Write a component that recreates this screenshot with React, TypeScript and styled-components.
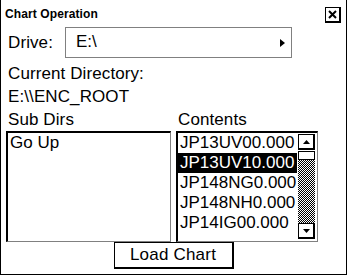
import React from "react"
import styled, { createGlobalStyle } from "styled-components"

const GlobalStyle = createGlobalStyle`
  html, body {
    margin: 0;
    padding: 0;
    background: #ffffff;
  }
  body {
    font-family: "Liberation Sans", Arial, sans-serif;
    color: #000;
  }
`

const Frame = styled.div`
  box-sizing: border-box;
  width: 347px;
  height: 275px;
  border-right: 1px solid #000;
  border-bottom: 1px solid #000;
  border-left: 1px solid #000;
  padding: 0 0 0 5px;
  display: flex;
  flex-direction: column;
`

const TitleBar = styled.div`
  display: flex;
  justify-content: space-between;
  align-items: flex-start;
  height: 24px;
`

const Title = styled.span`
  font-size: 12px;
  font-weight: bold;
  margin: 7px 0 0 -1px;
  letter-spacing: 0.1px;
`

const CloseButton = styled.div`
  box-sizing: border-box;
  width: 16px;
  height: 16px;
  margin: 7px 5px 0 0;
  border: 1px solid #000;
  border-right-width: 2px;
  border-bottom-width: 2px;
  display: flex;
  align-items: center;
  justify-content: center;
`

const DriveRow = styled.div`
  display: flex;
  align-items: center;
  height: 30px;
  margin-top: 3px;
`

const Label = styled.div<{ $width?: number }>`
  font-size: 17px;
  letter-spacing: 0.1px;
  line-height: 23px;
  padding-left: 2px;
  width: ${(p) => (p.$width ? `${p.$width}px` : "auto")};
`

const DriveSelect = styled.div`
  box-sizing: border-box;
  width: 227px;
  height: 31px;
  border: 1px solid #808080;
  display: flex;
  align-items: center;
  justify-content: space-between;
  padding: 0 6px 0 10px;
  font-size: 17px;
`

const Arrow = styled.span`
  width: 0;
  height: 0;
  border-top: 4px solid transparent;
  border-bottom: 4px solid transparent;
  border-left: 5px solid #000;
  margin-top: 2px;
`

const InfoBlock = styled.div`
  margin-top: 5px;
`

const Columns = styled.div`
  display: grid;
  grid-template-columns: 170px 142px;
`

const Column = styled.div`
  display: flex;
  flex-direction: column;
`

const ListBox = styled.div<{ $width: number }>`
  box-sizing: border-box;
  width: ${(p) => p.$width}px;
  height: 111px;
  border-top: 2px solid #000;
  border-left: 2px solid #000;
  border-right: 1px solid #808080;
  border-bottom: 1px solid #808080;
  display: flex;
  overflow: hidden;
`

const Items = styled.div`
  flex: 1;
  min-width: 0;
  display: flex;
  flex-direction: column;
`

const Item = styled.div<{ $selected?: boolean }>`
  font-size: 17px;
  line-height: 20px;
  height: 20px;
  padding-left: 2px;
  white-space: nowrap;
  overflow: hidden;
  background: ${(p) => (p.$selected ? "#000" : "transparent")};
  color: ${(p) => (p.$selected ? "#fff" : "#000")};
`

const ScrollBar = styled.div`
  width: 17px;
  flex-shrink: 0;
  display: flex;
  flex-direction: column;
  padding: 1px 2px 2px 1px;
`

const ScrollArrow = styled.div`
  box-sizing: border-box;
  height: 16px;
  border: 1px solid #000;
  border-right-width: 2px;
  border-bottom-width: 2px;
  background: #fff;
  display: flex;
  align-items: center;
  justify-content: center;
`

const Thumb = styled.div`
  box-sizing: border-box;
  height: 9px;
  border: 1px solid #000;
  background: #fff;
  margin-top: 1px;
`

const Track = styled.div`
  flex: 1;
  background-color: #fff;
  background-image: repeating-conic-gradient(#000 0 25%, #fff 0 50%);
  background-size: 2px 2px;
`

const Footer = styled.div`
  display: flex;
  justify-content: center;
  padding-right: 5px;
`

const PushButton = styled.div`
  box-sizing: border-box;
  width: 120px;
  height: 27px;
  border: 1px solid #000;
  border-right-width: 2px;
  border-bottom-width: 2px;
  font-size: 17px;
  letter-spacing: 0.2px;
  display: flex;
  align-items: center;
  justify-content: center;
`

const contents = [
  "JP13UV00.000",
  "JP13UV10.000",
  "JP148NG0.000",
  "JP148NH0.000",
  "JP14IG00.000",
]

const App = () => {
  return (
    <>
      <GlobalStyle />
      <Frame>
        <TitleBar>
          <Title>Chart Operation</Title>
          <CloseButton>
            <svg width="9" height="9" viewBox="0 0 9 9">
              <path d="M1 1 L8 8 M8 1 L1 8" stroke="#000" strokeWidth="2" />
            </svg>
          </CloseButton>
        </TitleBar>
        <DriveRow>
          <Label $width={57}>Drive:</Label>
          <DriveSelect>
            <span>E:\</span>
            <Arrow />
          </DriveSelect>
        </DriveRow>
        <InfoBlock>
          <Label>Current Directory:</Label>
          <Label>E:\\ENC_ROOT</Label>
        </InfoBlock>
        <Columns>
          <Column>
            <Label>Sub Dirs</Label>
            <ListBox $width={165}>
              <Items>
                <Item>Go Up</Item>
              </Items>
            </ListBox>
          </Column>
          <Column>
            <Label>Contents</Label>
            <ListBox $width={142}>
              <Items>
                {contents.map((c, i) => (
                  <Item key={c} $selected={i === 1}>
                    {c}
                  </Item>
                ))}
              </Items>
              <ScrollBar>
                <ScrollArrow>
                  <svg width="7" height="4" viewBox="0 0 7 4">
                    <path d="M3.5 0 L7 4 L0 4 Z" fill="#000" />
                  </svg>
                </ScrollArrow>
                <Thumb />
                <Track />
                <ScrollArrow>
                  <svg width="7" height="4" viewBox="0 0 7 4">
                    <path d="M0 0 L7 0 L3.5 4 Z" fill="#000" />
                  </svg>
                </ScrollArrow>
              </ScrollBar>
            </ListBox>
          </Column>
        </Columns>
        <Footer>
          <PushButton>Load Chart</PushButton>
        </Footer>
      </Frame>
    </>
  )
}

export default App
